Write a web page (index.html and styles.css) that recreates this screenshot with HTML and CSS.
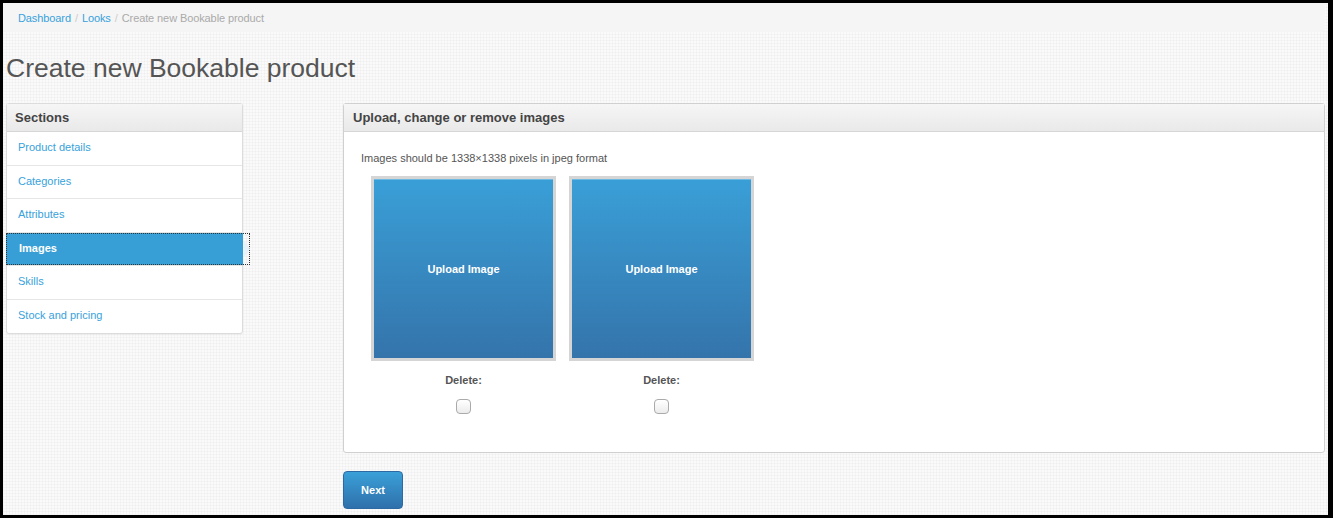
FILE: index.html
```html
<!DOCTYPE html>
<html lang="en">
  <head>
    <meta charset="UTF-8" />
    <meta name="viewport" content="width=device-width, initial-scale=1.0" />
    <title>Create new Bookable product</title>
    <link rel="stylesheet" href="styles.css">
  </head>
  <body>
    <ul class="breadcrumb">
      <li><a href="#">Dashboard</a><span class="divider">/</span></li>
      <li><a href="#">Looks</a><span class="divider">/</span></li>
      <li class="active">Create new Bookable product</li>
    </ul>

    <h1 class="page-title">Create new Bookable product</h1>

    <div class="layout">
      <div class="sections">
        <div class="panel-heading">Sections</div>
        <ul class="section-list">
          <li><a href="#">Product details</a></li>
          <li><a href="#">Categories</a></li>
          <li><a href="#">Attributes</a></li>
          <li class="current"><a href="#">Images</a></li>
          <li><a href="#">Skills</a></li>
          <li><a href="#">Stock and pricing</a></li>
        </ul>
      </div>

      <div class="main">
        <form class="panel" id="imagesForm">
          <div class="panel-heading">Upload, change or remove images</div>
          <div class="panel-body">
            <p class="hint">Images should be 1338&times;1338 pixels in jpeg format</p>
            <div class="tiles">
              <div class="tile">
                <button type="button" class="upload">Upload Image</button>
                <label class="delete-label" for="delete1">Delete:</label>
                <input type="checkbox" id="delete1" class="delete-box" />
              </div>
              <div class="tile">
                <button type="button" class="upload">Upload Image</button>
                <label class="delete-label" for="delete2">Delete:</label>
                <input type="checkbox" id="delete2" class="delete-box" />
              </div>
            </div>
          </div>
        </form>
        <button type="submit" form="imagesForm" class="next">Next</button>
      </div>
    </div>
  </body>
</html>
```

FILE: styles.css
```css
html {
  background: #000;
}
body {
  font-family: "Liberation Sans", Arial, sans-serif;
  margin: 3px 5px 3px 3px;
  height: 512px;
  overflow: hidden;
  color: #555;
  background-color: #fafafa;
  background-image:
    repeating-linear-gradient(0deg, rgba(0, 0, 0, 0.025) 0 1px, transparent 1px 3px),
    repeating-linear-gradient(90deg, rgba(0, 0, 0, 0.025) 0 1px, transparent 1px 3px);
}
a {
  color: #37a2dc;
  text-decoration: none;
}

.breadcrumb {
  list-style: none;
  margin: 0 3px 0 0;
  padding: 0 15px;
  height: 29px;
  display: flex;
  align-items: center;
  background: #f5f5f5;
  border-radius: 0 0 4px 4px;
  font-size: 11px;
  letter-spacing: -0.1px;
}
.breadcrumb .divider {
  color: #ccc;
  padding: 0 4px;
}
.breadcrumb .active {
  color: #aaa;
}

.page-title {
  font-size: 26.5px;
  font-weight: normal;
  color: #555;
  margin: 19px 0 0 3px;
  line-height: 34px;
}

.layout {
  display: flex;
  align-items: flex-start;
  margin-top: 18px;
  padding-left: 3px;
}

.panel-heading {
  height: 27px;
  line-height: 27px;
  padding: 0 9px;
  font-size: 13px;
  font-weight: bold;
  color: #444;
  background: linear-gradient(#f6f6f6, #e9e9e9);
  border-bottom: 1px solid #d6d6d6;
}

.sections {
  width: 235px;
  background: #fff;
  border: 1px solid #dcdcdc;
  border-radius: 3px;
  box-shadow: 0 1px 2px rgba(0, 0, 0, 0.04);
}
.sections .panel-heading {
  padding: 0 8px;
}
.section-list {
  list-style: none;
  margin: 0;
  padding: 0;
}
.section-list li {
  border-top: 1px solid #e6e6e6;
  position: relative;
}
.section-list li:first-child {
  border-top: none;
}
.section-list a {
  display: block;
  height: 32.6px;
  line-height: 30.5px;
  padding-left: 11px;
  font-size: 11px;
}
.section-list .current {
  margin: 0 -1px;
}
.section-list .current a {
  background: #389fd6;
  color: #fff;
  font-weight: bold;
  padding-left: 13px;
}
/* focus ring of the active row, a bit wider than the list */
.section-list .current::before {
  content: "";
  position: absolute;
  left: 0;
  top: 0;
  right: -7px;
  bottom: 0;
  border: 1px dotted #333;
}
/* little pointer that sticks out of the active row */
.section-list .current::after {
  content: "";
  position: absolute;
  right: -7px;
  top: 8px;
  border-left: 6px solid #e8f2fa;
  border-top: 8px solid transparent;
  border-bottom: 8px solid transparent;
}

.main {
  margin-left: 100px;
  width: 982px;
}
.panel {
  background: #fff;
  border: 1px solid #d0d0d0;
  border-radius: 3px;
  margin: 0;
}
.panel-body {
  padding: 19px 17px 0;
  box-sizing: border-box;
  height: 320px;
}
.hint {
  font-size: 11px;
  margin: 0;
  line-height: 14px;
}
.tiles {
  display: flex;
  gap: 13px;
  margin: 11px 0 0 10px;
}
.tile {
  width: 185px;
  display: flex;
  flex-direction: column;
  align-items: center;
}
.upload {
  flex-shrink: 0;
  width: 185px;
  height: 185px;
  border: 3px solid #d5d5d5;
  background: linear-gradient(#3a9fd7, #3474ab);
  box-shadow: inset 0 1px 0 #6cb9e4;
  color: #fff;
  font-family: inherit;
  font-size: 11px;
  font-weight: bold;
  cursor: pointer;
  padding: 0;
}
.delete-label {
  font-size: 11px;
  font-weight: bold;
  margin-top: 13px;
  line-height: 13px;
}
.delete-box {
  appearance: none;
  width: 15px;
  height: 15px;
  margin: 12px 0 0;
  border: 1px solid #aaa;
  border-radius: 4px;
  background: linear-gradient(#fff, #ececec);
}

.next {
  margin-top: 18px;
  width: 60px;
  height: 38px;
  border: 1px solid #2d6aa3;
  border-radius: 4px;
  background: linear-gradient(#3aa0d8, #2f70ab);
  color: #fff;
  font-family: inherit;
  font-size: 11px;
  font-weight: bold;
  cursor: pointer;
}
```
